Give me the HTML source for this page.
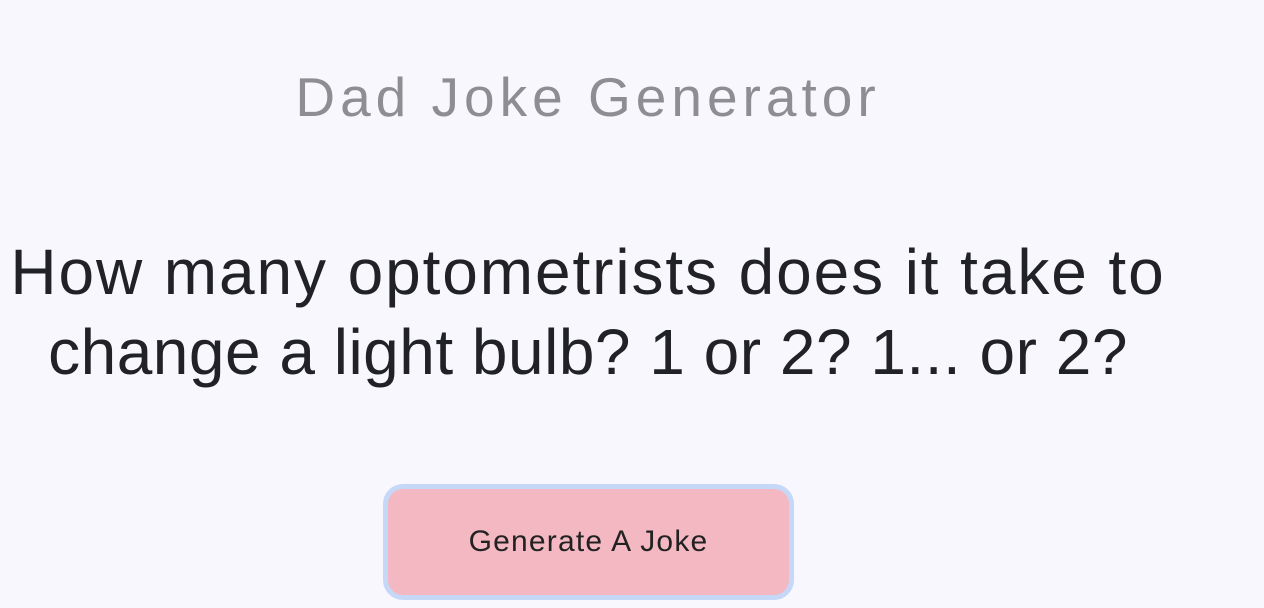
<!DOCTYPE html>
<html><head><style>
html,body{margin:0;padding:0;background:#f8f7fd;width:1264px;height:608px;overflow:hidden;font-family:"Liberation Sans",sans-serif;}
h1{position:absolute;left:0;width:1176px;top:62px;margin:0;font-weight:normal;font-size:55px;line-height:70px;letter-spacing:5px;color:#8e8d93;text-align:center;}
.joke{position:absolute;left:0;width:1176px;top:232px;margin:0;font-size:64px;line-height:80px;color:#212227;letter-spacing:1.9px;text-align:center;}
.joke .l2{letter-spacing:0.5px;}
.btn{position:absolute;left:383px;top:484px;width:401px;height:106px;border:5px solid #c5d8f8;border-radius:20px;background:#f4b8c3;color:#222;font-size:30px;letter-spacing:1.2px;line-height:106px;text-align:center;}
</style></head><body>
<h1>Dad Joke Generator</h1>
<p class="joke">How many optometrists does it take to<br><span class="l2">change a light bulb? 1 or 2? 1... or 2?</span></p>
<div class="btn">Generate A Joke</div>
</body></html>
